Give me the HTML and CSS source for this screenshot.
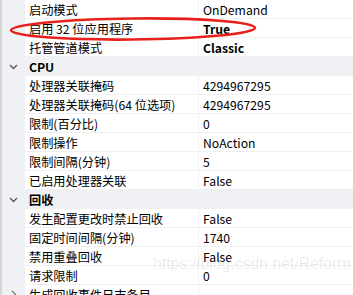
FILE: index.html
```html
<!DOCTYPE html>
<html>
<head>
<meta charset="utf-8">
<link rel="stylesheet" href="styles.css">
</head>
<body>
<div class="grid">
  <div class="row"><div class="gut"></div><div class="name">启动模式</div><div class="val">OnDemand</div></div>
  <div class="row"><div class="gut"></div><div class="name">启用 32 位应用程序</div><div class="val b">True</div></div>
  <div class="row"><div class="gut"></div><div class="name">托管管道模式</div><div class="val b">Classic</div></div>
  <div class="row cat"><div class="gut"><svg class="chev" width="9" height="6" viewBox="0 0 9 6"><path d="M1 1 L4.5 4.5 L8 1" fill="none" stroke="#555" stroke-width="1.3"/></svg></div><div class="cname">CPU</div></div>
  <div class="row"><div class="gut"></div><div class="name">处理器关联掩码</div><div class="val">4294967295</div></div>
  <div class="row"><div class="gut"></div><div class="name">处理器关联掩码(64 位选项)</div><div class="val">4294967295</div></div>
  <div class="row"><div class="gut"></div><div class="name">限制(百分比)</div><div class="val">0</div></div>
  <div class="row"><div class="gut"></div><div class="name">限制操作</div><div class="val">NoAction</div></div>
  <div class="row"><div class="gut"></div><div class="name">限制间隔(分钟)</div><div class="val">5</div></div>
  <div class="row"><div class="gut"></div><div class="name">已启用处理器关联</div><div class="val">False</div></div>
  <div class="row cat"><div class="gut"><svg class="chev" width="9" height="6" viewBox="0 0 9 6"><path d="M1 1 L4.5 4.5 L8 1" fill="none" stroke="#555" stroke-width="1.3"/></svg></div><div class="cname">回收</div></div>
  <div class="row"><div class="gut"></div><div class="name">发生配置更改时禁止回收</div><div class="val">False</div></div>
  <div class="row"><div class="gut"></div><div class="name">固定时间间隔(分钟)</div><div class="val">1740</div></div>
  <div class="row"><div class="gut"></div><div class="name">禁用重叠回收</div><div class="val">False</div></div>
  <div class="row"><div class="gut"></div><div class="name">请求限制</div><div class="val">0</div></div>
  <div class="row"><div class="gut"><svg class="chev" width="6" height="9" viewBox="0 0 6 9"><path d="M1 1 L4.5 4.5 L1 8" fill="none" stroke="#777" stroke-width="1.2"/></svg></div><div class="name">生成回收事件日志条目</div><div class="val"></div></div>
</div>
<div class="watermark">https://blog.csdn.net/Reform</div>
<svg class="ring" width="353" height="60" viewBox="0 0 353 60"><ellipse cx="133" cy="29" rx="122" ry="10.5" fill="none" stroke="#e8201c" stroke-width="2.6" transform="rotate(-0.6 133 29)"/></svg>
</body>
</html>
```
FILE: styles.css
```css
html, body {
  margin: 0;
  padding: 0;
  background: #ffffff;
}
body {
  width: 353px;
  height: 295px;
  overflow: hidden;
  position: relative;
  font-family: "Noto Sans CJK SC", "Noto Sans", sans-serif;
  font-size: 12.2px;
  color: #000;
}
.grid {
  display: flex;
  flex-direction: column;
  border-left: 2px solid #d4d4d4;
}
.row {
  display: grid;
  grid-template-columns: 23px 174px 1fr;
  height: 19px;
}
.gut {
  background: #f0f1f4;
  display: flex;
  align-items: center;
  justify-content: center;
}
.name, .val {
  border-bottom: 1px solid #f0f0f0;
  line-height: 20px;
  white-space: nowrap;
  overflow: hidden;
}
.name {
  padding-left: 4px;
  border-right: 1px solid #f0f0f0;
}
.val {
  padding-left: 4px;
}
.b, .cname {
  font-weight: bold;
}
.cat {
  background: #f0f1f4;
}
.cname {
  grid-column: 2 / 4;
  padding-left: 4px;
  line-height: 20px;
}
.watermark {
  position: absolute;
  left: 153px;
  top: 255px;
  font-family: "Liberation Sans", Arial, sans-serif;
  font-size: 15.8px;
  color: rgba(0, 0, 0, 0.09);
  white-space: nowrap;
}
.ring {
  position: absolute;
  left: 0;
  top: 0;
}
```
